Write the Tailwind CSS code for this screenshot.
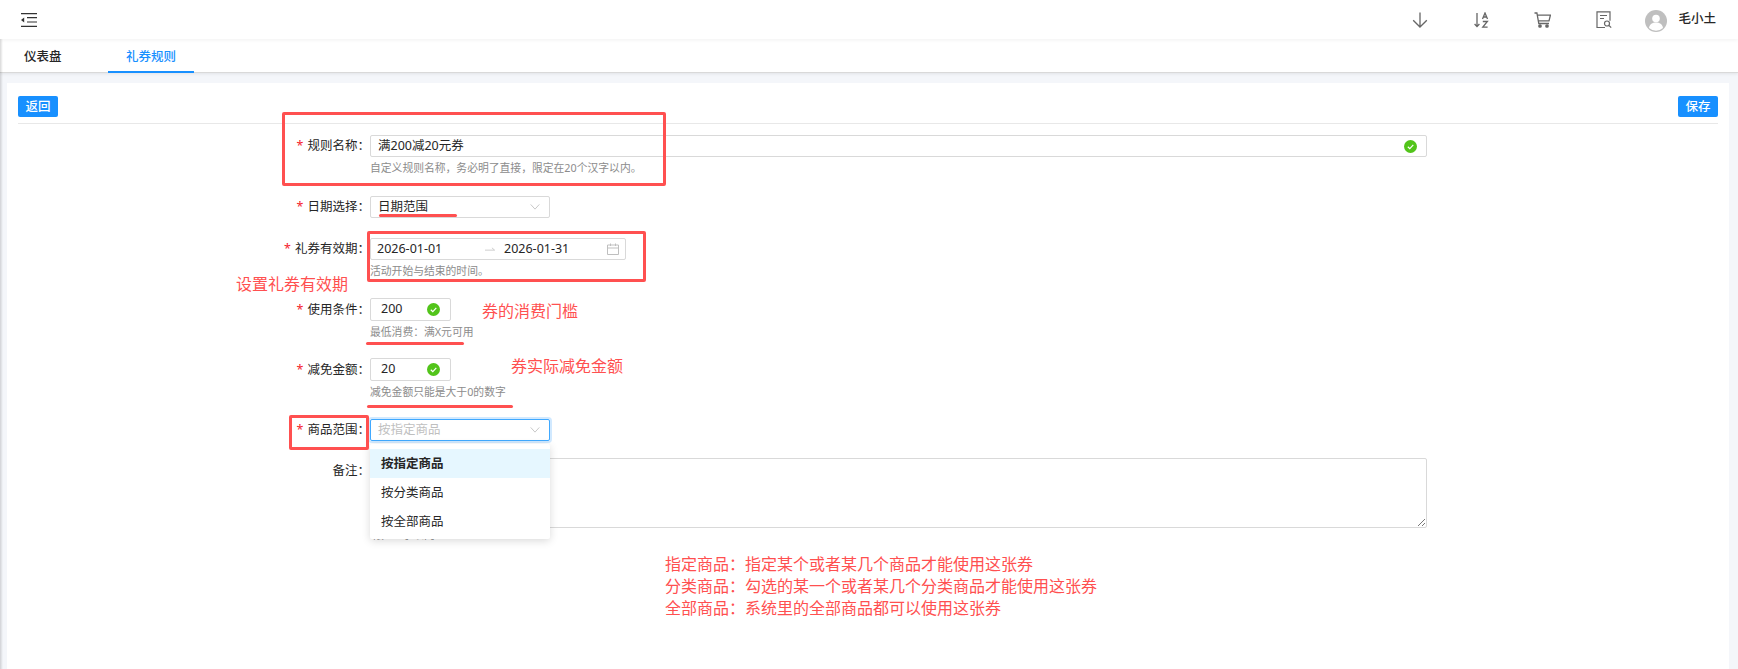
<!doctype html>
<html lang="zh">
<head>
<meta charset="utf-8">
<title>礼券规则</title>
<script src="https://cdn.jsdelivr.net/npm/@tailwindcss/browser@4"></script>
</head>
<body class="relative w-[1738px] h-[669px] overflow-hidden bg-white font-['Noto_Sans','Noto_Sans_CJK_SC',sans-serif] text-[12.5px] text-[#262626]">

  <!-- Top bar -->
  <header class="relative z-10 flex items-center justify-between h-[39px] bg-white pl-[21px] pr-[22px] shadow-[0_1px_4px_rgba(0,0,0,0.06)]">
    <svg class="w-[16px] h-[14px]" viewBox="0 0 16 14" fill="none" stroke="#333" stroke-width="1.2">
      <path d="M0 .6h16M6 4.7h10M6 9h10M0 13.4h16"/>
      <path d="M0 7l3.2-2.4v4.8z" fill="#333" stroke="none"/>
    </svg>
    <div class="flex items-center text-[#666]">
      <svg class="w-[16px] h-[16px] mr-[46px]" viewBox="0 0 16 16" fill="none" stroke="#666" stroke-width="1.3"><path d="M8 .5v14.5M1.2 8.2 8 15l6.8-6.8"/></svg>
      <svg class="w-[15px] h-[16px] mr-[45px]" viewBox="0 0 15 16" fill="none" stroke="#666" stroke-width="1.3">
        <path d="M3 1v13.5M.6 12 3 14.6 5.4 12"/>
        <path d="M8.5 7 11 1l2.5 6M9.4 5h3.200M8.800 9.500h4.600l-4.600 5.600h4.800"/>
      </svg>
      <svg class="w-[17px] h-[16px] mr-[45px]" viewBox="0 0 17 16" fill="none" stroke="#666" stroke-width="1.3">
        <path d="M.5 1h2.400l1.900 10.500h10.200M3.400 3.200h13l-1.400 5.600H4.400"/>
        <circle cx="6" cy="14" r="1.200" fill="#666"/><circle cx="13" cy="14" r="1.200" fill="#666"/>
      </svg>
      <svg class="w-[16px] h-[18px] mr-[33px]" viewBox="0 0 16 18" fill="none" stroke="#666" stroke-width="1.2">
        <path d="M9 16.500H1V.8h13v9M4 4.500h7M4 7.500h4"/>
        <circle cx="11" cy="12.500" r="2.500"/><path d="m13 14.500 2.200 2.200"/>
      </svg>
      <svg class="w-[22px] h-[22px] mr-[11px] mt-[3px]" viewBox="0 0 22 22">
        <circle cx="11" cy="11" r="11" fill="#bfbfbf"/>
        <circle cx="11" cy="8.500" r="3.800" fill="#fff"/>
        <path d="M4 18c.6-3.800 3.500-5.400 7-5.400s6.400 1.600 7 5.400a10.500 10.500 0 0 1-14 0z" fill="#fff"/>
      </svg>
      <span class="text-[12.500px] text-[#262626] font-medium">毛小土</span>
    </div>
  </header>

  <!-- Tabs -->
  <nav class="flex h-[34px] bg-white pl-[24px] border-b border-[#d9d9d9] shadow-[0_1px_3px_rgba(0,0,0,0.08)] relative z-[5]">
    <a class="w-[38px] leading-[36px] font-medium text-[#262626]">仪表盘</a>
    <a class="ml-[46px] w-[86px] text-center leading-[36px] font-medium text-[#1890ff] border-b-2 border-[#1890ff] h-[34px]">礼券规则</a>
  </nav>

  <!-- soft shadow of the collapsed sidebar -->
  <div class="absolute z-[6] left-0 top-[39px] w-[3px] h-[630px] bg-gradient-to-r from-black/15 to-transparent"></div>

  <!-- Page body -->
  <main class="h-[596px] bg-[#f4f6fa] pl-[7px] pr-[9px] pt-[10px]">
    <section class="h-full bg-white px-[11px] pt-[13px]">
      <div class="flex justify-between h-[28px] border-b border-[#e8e8e8]">
        <button class="w-[40px] h-[21px] bg-[#1890ff] rounded-[2px] text-white text-[12.500px] font-medium leading-[21px]">返回</button>
        <button class="w-[40px] h-[21px] bg-[#1890ff] rounded-[2px] text-white text-[12.500px] font-medium leading-[21px]">保存</button>
      </div>

      <form class="pt-[11px]">
        <!-- 规则名称 -->
        <div class="flex h-[61px]">
          <label class="w-[352px] h-[22px] leading-[22px] text-right"><span class="text-[#f5222d] mr-[4px]">*</span>规则名称：</label>
          <div class="w-[1057px]">
            <div class="flex items-center justify-between h-[22px] border border-[#d9d9d9] rounded-[2px] pl-[7px] pr-[9px]">
              <span>满200减20元券</span>
              <svg class="w-[13px] h-[13px]" viewBox="0 0 13 13"><circle cx="6.500" cy="6.500" r="6.500" fill="#52c41a"/><path d="m3.800 6.700 2 1.900 3.500-3.700" fill="none" stroke="#fff" stroke-width="1.200"/></svg>
            </div>
            <p class="mt-[4px] text-[10.800px] leading-[14px] text-[#8c8c8c]">自定义规则名称，务必明了直接，限定在20个汉字以内。</p>
          </div>
        </div>

        <!-- 日期选择 -->
        <div class="flex h-[42px]">
          <label class="w-[352px] h-[22px] leading-[22px] text-right"><span class="text-[#f5222d] mr-[4px]">*</span>日期选择：</label>
          <div class="flex items-center justify-between w-[180px] h-[22px] border border-[#d9d9d9] rounded-[2px] pl-[7px] pr-[9px]">
            <span>日期范围</span>
            <svg class="w-[10px] h-[6px]" viewBox="0 0 11 7" fill="none" stroke="#bfbfbf"><path d="m.5.500 5 5.500 5-5.500"/></svg>
          </div>
        </div>

        <!-- 礼券有效期 -->
        <div class="flex h-[60px]">
          <label class="w-[352px] h-[22px] leading-[22px] text-right"><span class="text-[#f5222d] mr-[4px]">*</span>礼券有效期：</label>
          <div>
            <div class="flex items-center w-[256px] h-[22px] border border-[#d9d9d9] rounded-[2px] pl-[6px]">
              <span class="w-[108px]">2026-01-01</span>
              <svg class="w-[10px] h-[6px] mr-[9px]" viewBox="0 0 13 6" fill="none" stroke="#bfbfbf"><path d="M0 4.500h12.500L9 1.500"/></svg>
              <span class="w-[103px]">2026-01-31</span>
              <svg class="w-[12px] h-[12px]" viewBox="0 0 12 12" fill="none" stroke="#bfbfbf"><path d="M.5 2h11v9.500H.5zM.5 5h11M3.500.5V3M8.500.5V3"/></svg>
            </div>
            <p class="mt-[4px] text-[10.800px] leading-[14px] text-[#8c8c8c]">活动开始与结束的时间。</p>
          </div>
        </div>

        <!-- 使用条件 -->
        <div class="flex h-[60px]">
          <label class="w-[352px] h-[23px] leading-[23px] text-right"><span class="text-[#f5222d] mr-[4px]">*</span>使用条件：</label>
          <div>
            <div class="flex items-center justify-between w-[81px] h-[23px] border border-[#d9d9d9] rounded-[2px] pl-[10px] pr-[10px]">
              <span>200</span>
              <svg class="w-[13px] h-[13px]" viewBox="0 0 13 13"><circle cx="6.500" cy="6.500" r="6.500" fill="#52c41a"/><path d="m3.800 6.700 2 1.900 3.500-3.700" fill="none" stroke="#fff" stroke-width="1.200"/></svg>
            </div>
            <p class="mt-[4px] text-[10.800px] leading-[14px] text-[#8c8c8c]">最低消费：满X元可用</p>
          </div>
        </div>

        <!-- 减免金额 -->
        <div class="flex h-[61px]">
          <label class="w-[352px] h-[23px] leading-[23px] text-right"><span class="text-[#f5222d] mr-[4px]">*</span>减免金额：</label>
          <div>
            <div class="flex items-center justify-between w-[81px] h-[23px] border border-[#d9d9d9] rounded-[2px] pl-[10px] pr-[10px]">
              <span>20</span>
              <svg class="w-[13px] h-[13px]" viewBox="0 0 13 13"><circle cx="6.500" cy="6.500" r="6.500" fill="#52c41a"/><path d="m3.800 6.700 2 1.900 3.500-3.700" fill="none" stroke="#fff" stroke-width="1.200"/></svg>
            </div>
            <p class="mt-[4px] text-[10.800px] leading-[14px] text-[#8c8c8c]">减免金额只能是大于0的数字</p>
          </div>
        </div>

        <!-- 商品范围 -->
        <div class="flex h-[39px]">
          <label class="w-[352px] h-[22px] leading-[22px] text-right"><span class="text-[#f5222d] mr-[4px]">*</span>商品范围：</label>
          <div class="relative">
            <div class="flex items-center justify-between w-[180px] h-[22px] border border-[#40a9ff] rounded-[2px] pl-[7px] pr-[9px] shadow-[0_0_0_2px_rgba(24,144,255,0.2)]">
              <span class="text-[#bfbfbf]">按指定商品</span>
              <svg class="w-[10px] h-[6px]" viewBox="0 0 11 7" fill="none" stroke="#bfbfbf"><path d="m.5.500 5 5.500 5-5.500"/></svg>
            </div>
            <!-- open dropdown -->
            <ul class="absolute z-20 left-0 top-[25px] w-[180px] h-[95px] pt-[5px] bg-white rounded-[2px] shadow-[0_2px_8px_rgba(0,0,0,0.15)]">
              <li class="h-[29px] leading-[29px] pl-[11px] bg-[#e6f7ff] font-bold text-[#262626]">按指定商品</li>
              <li class="h-[29px] leading-[29px] pl-[11px]">按分类商品</li>
              <li class="h-[29px] leading-[29px] pl-[11px]">按全部商品</li>
            </ul>
          </div>
        </div>

        <!-- 备注 -->
        <div class="flex">
          <label class="w-[352px] h-[22px] leading-[26px] text-right">备注：</label>
          <div class="w-[1057px]">
            <div class="relative h-[70px] border border-[#d9d9d9] rounded-[2px]">
              <svg class="absolute right-[1px] bottom-[1px] w-[8px] h-[8px]" viewBox="0 0 8 8" fill="none" stroke="#555" stroke-width=".8"><path d="M1 8 8 1M5 8l3-3"/></svg>
            </div>
            <p class="text-[10.800px] leading-[14px] pl-[3px] text-[#8c8c8c]">限100字以内</p>
          </div>
        </div>
      </form>
    </section>
  </main>

  <!-- Red markup drawn over the screenshot -->
  <div class="absolute z-30 left-[282px] top-[112px] w-[384px] h-[74px] border-[3px] border-[#ff5050] rounded-[2px]"></div>
  <div class="absolute z-30 left-[367px] top-[231px] w-[279px] h-[51px] border-[3px] border-[#ff5050] rounded-[2px]"></div>
  <div class="absolute z-30 left-[289px] top-[415px] w-[80px] h-[35px] border-[3px] border-[#ff5050] rounded-[2px]"></div>
  <div class="absolute z-30 left-[379px] top-[214px] w-[78px] h-[3px] bg-[#ff5050] rounded-full"></div>
  <div class="absolute z-30 left-[366px] top-[342px] w-[98px] h-[3px] bg-[#ff5050] rounded-full"></div>
  <div class="absolute z-30 left-[367px] top-[405px] w-[146px] h-[3px] bg-[#ff5050] rounded-full"></div>
  <p class="absolute z-30 left-[236px] top-[273px] text-[16px] leading-[22px] text-[#ff5050]">设置礼券有效期</p>
  <p class="absolute z-30 left-[482px] top-[300px] text-[16px] leading-[22px] text-[#ff5050]">券的消费门槛</p>
  <p class="absolute z-30 left-[511px] top-[355px] text-[16px] leading-[22px] text-[#ff5050]">券实际减免金额</p>
  <div class="absolute z-30 left-[665px] top-[553px] text-[16px] leading-[22px] text-[#ff5050]">
    <p>指定商品：指定某个或者某几个商品才能使用这张券</p>
    <p>分类商品：勾选的某一个或者某几个分类商品才能使用这张券</p>
    <p>全部商品：系统里的全部商品都可以使用这张券</p>
  </div>
</body>
</html>
